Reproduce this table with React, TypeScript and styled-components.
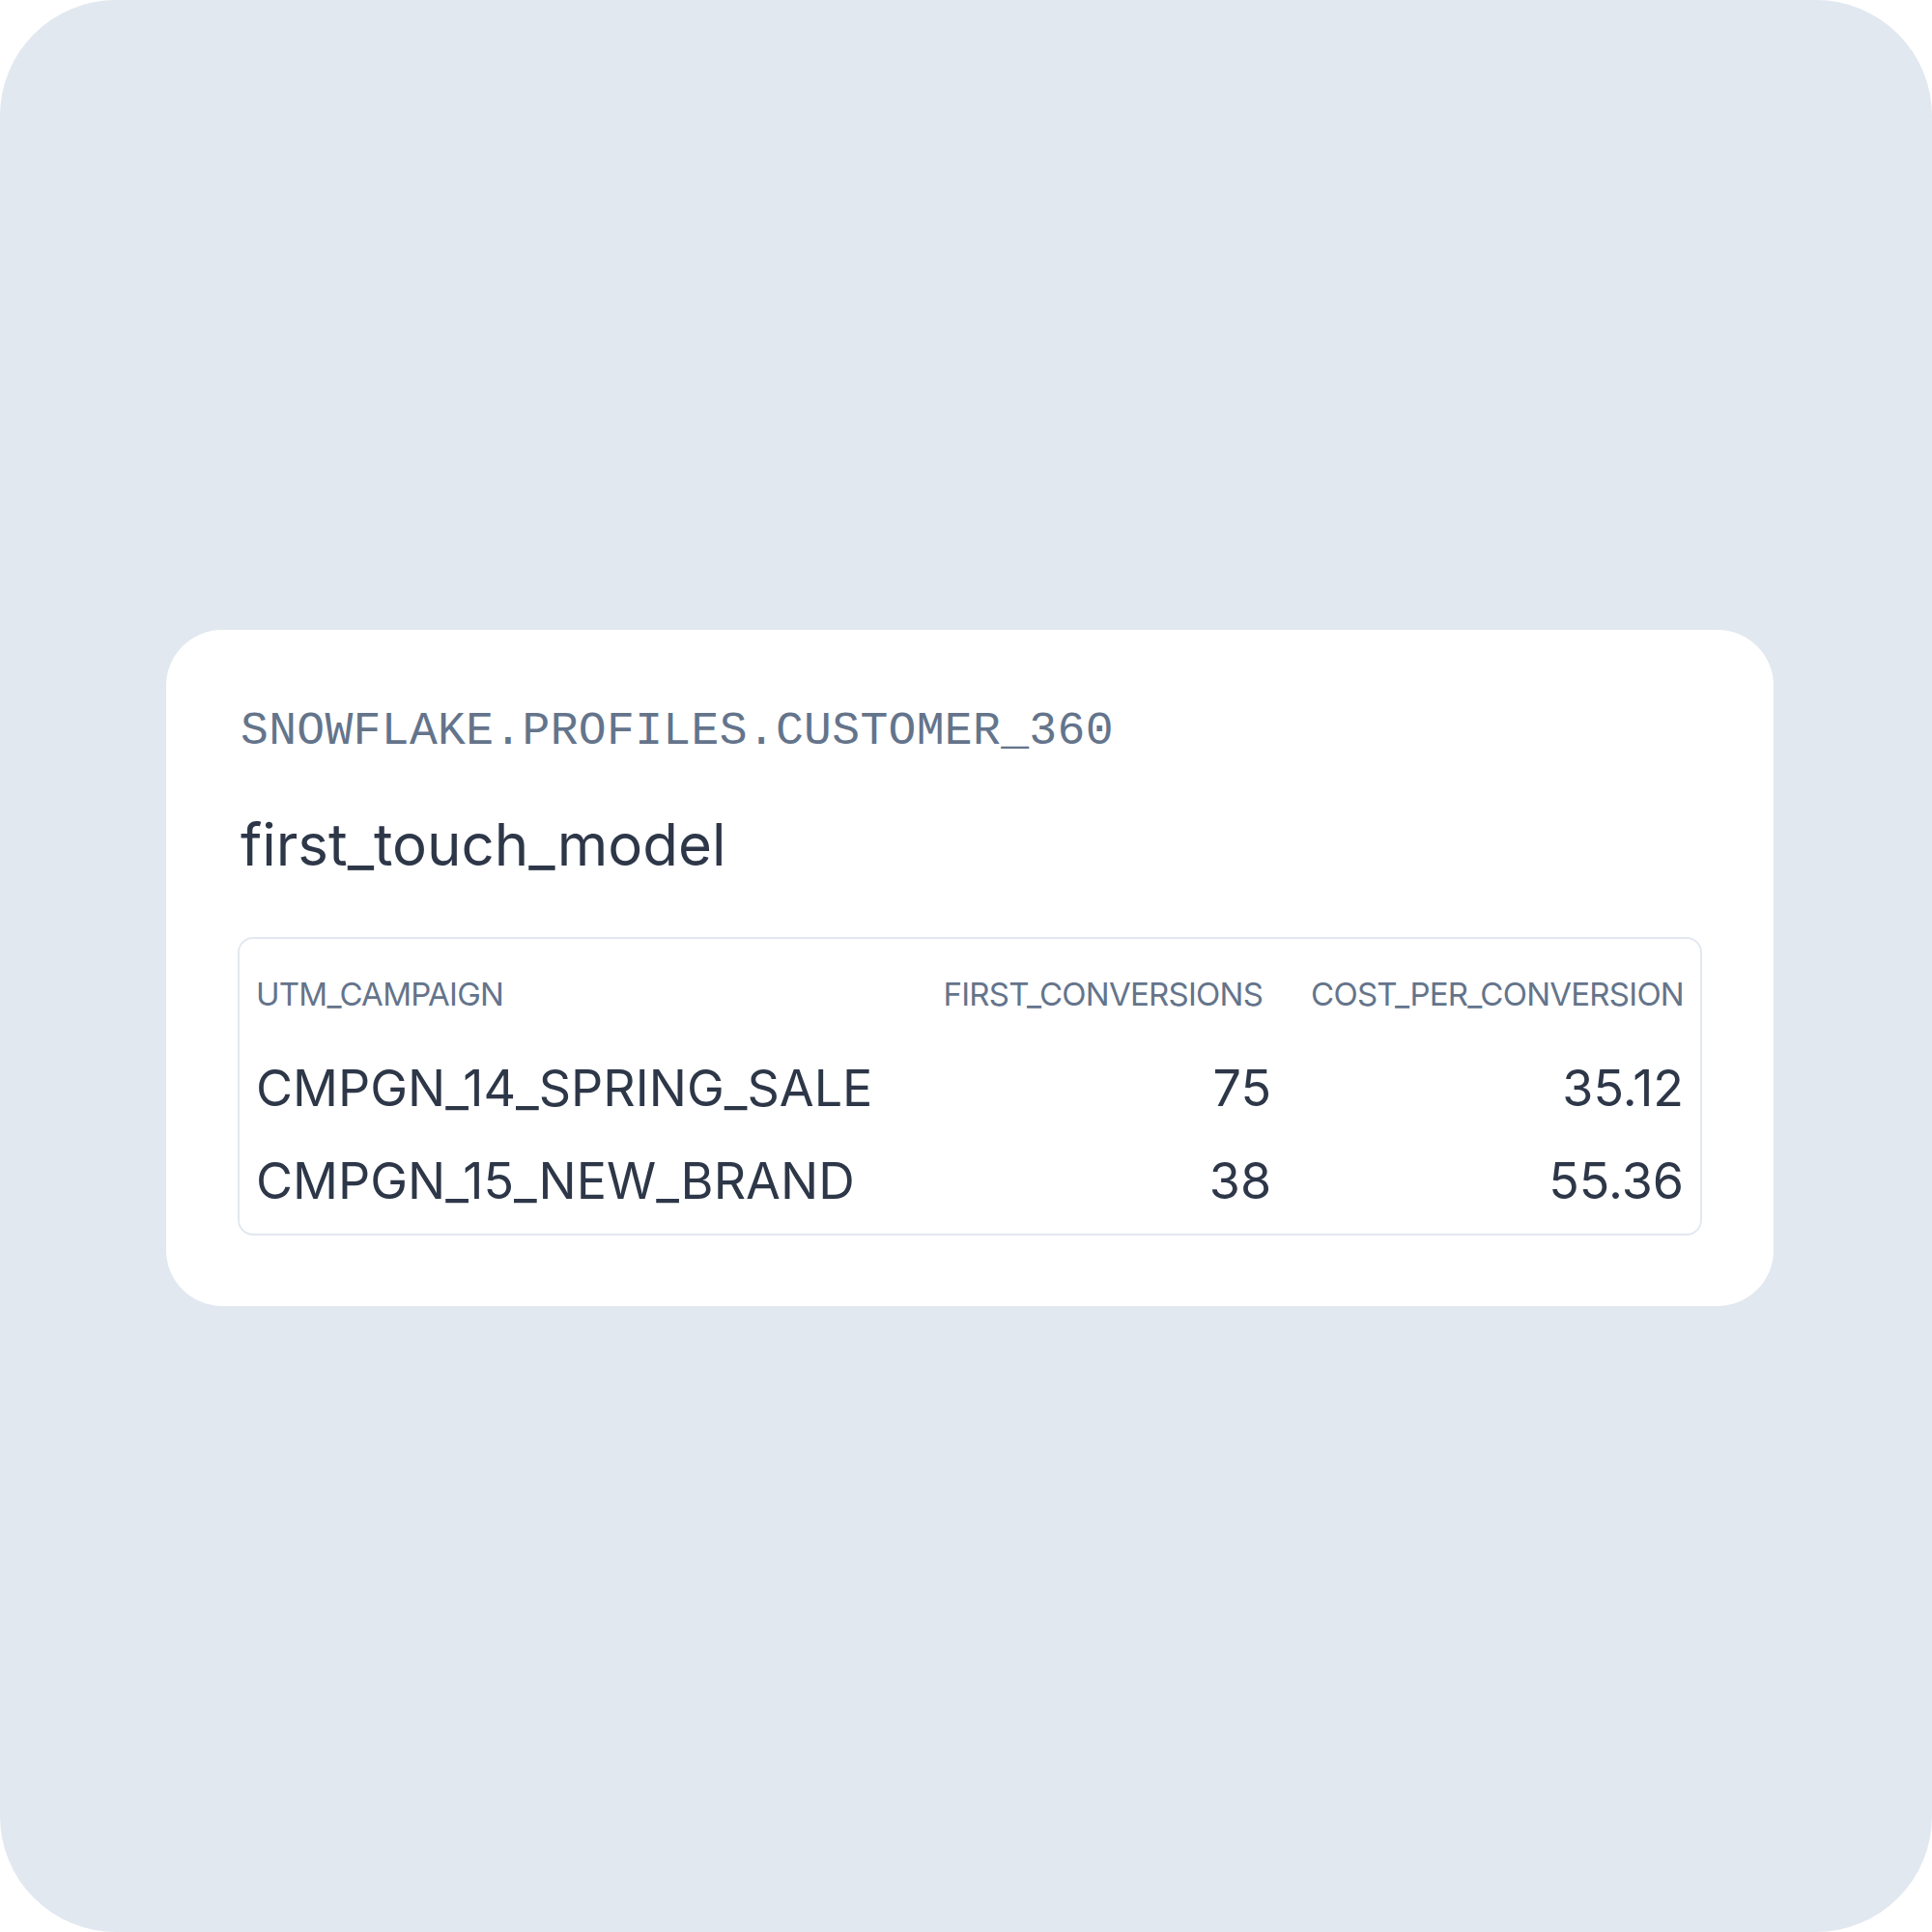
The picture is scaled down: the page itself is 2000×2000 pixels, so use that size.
import * as React from 'react';
import styled, { createGlobalStyle } from 'styled-components';

type Row = {
  campaign: string;
  conversions: number;
  cost: string;
};

const rows: Row[] = [
  { campaign: 'CMPGN_14_SPRING_SALE', conversions: 75, cost: '35.12' },
  { campaign: 'CMPGN_15_NEW_BRAND', conversions: 38, cost: '55.36' },
];

const App: React.FC = () => {
  return (
    <>
      <GlobalStyle />
      <Page>
        <Card>
          <SourcePath>SNOWFLAKE.PROFILES.CUSTOMER_360</SourcePath>
          <ModelName>first_touch_model</ModelName>
          <TableBox>
            <Grid>
              <HeadCell>UTM_CAMPAIGN</HeadCell>
              <HeadCell $align="right" $nudge={9}>FIRST_CONVERSIONS</HeadCell>
              <HeadCell $align="right">COST_PER_CONVERSION</HeadCell>
              {rows.map((row) => (
                <React.Fragment key={row.campaign}>
                  <Cell>{row.campaign}</Cell>
                  <Cell $align="right">{row.conversions}</Cell>
                  <Cell $align="right">{row.cost}</Cell>
                </React.Fragment>
              ))}
            </Grid>
          </TableBox>
        </Card>
      </Page>
    </>
  );
};

export default App;

const GlobalStyle = createGlobalStyle`
  html, body {
    margin: 0;
    padding: 0;
    background: #ffffff;
  }

  body {
    font-family: Inter, 'Noto Sans', sans-serif;
  }
`;

const Page = styled.div`
  width: 2000px;
  height: 2000px;
  box-sizing: border-box;
  background: #e2e8f0;
  border-radius: 120px;
  display: flex;
  align-items: center;
  justify-content: center;
  padding-left: 8px;
  padding-top: 4px;
`;

const Card = styled.div`
  width: 1664px;
  box-sizing: border-box;
  padding: 81px 74px 73px;
  background: #ffffff;
  border-radius: 58px;
  display: flex;
  flex-direction: column;
`;

const SourcePath = styled.div`
  margin-left: 3px;
  font-family: 'Liberation Mono', 'DejaVu Sans Mono', monospace;
  font-size: 48px;
  letter-spacing: 0.35px;
  line-height: 1;
  color: #64748b;
  white-space: nowrap;
`;

const ModelName = styled.h1`
  margin: 63px 0 0 3px;
  font-family: Inter, sans-serif;
  font-weight: 400;
  font-size: 60px;
  line-height: 1;
  color: #2d3748;
`;

const TableBox = styled.div`
  margin-top: 66px;
  border: 2px solid #e2e8f0;
  border-radius: 16px;
  padding: 41px 17px 28px 17px;
`;

const Grid = styled.div`
  display: grid;
  grid-template-columns: 1fr auto auto;
  column-gap: 41px;
  row-gap: 44px;
  align-items: start;
`;

const HeadCell = styled.div<{ $align?: 'left' | 'right'; $nudge?: number }>`
  font-family: Inter, sans-serif;
  font-size: 33px;
  letter-spacing: -0.75px;
  line-height: 1;
  color: #64748b;
  text-align: ${({ $align }) => $align ?? 'left'};
  padding-right: ${({ $nudge }) => $nudge ?? 0}px;
  margin-bottom: 11px;
  white-space: nowrap;
`;

const Cell = styled.div<{ $align?: 'left' | 'right' }>`
  font-family: Inter, sans-serif;
  font-size: 52px;
  line-height: 1;
  color: #2d3748;
  text-align: ${({ $align }) => $align ?? 'left'};
  white-space: nowrap;
`;
